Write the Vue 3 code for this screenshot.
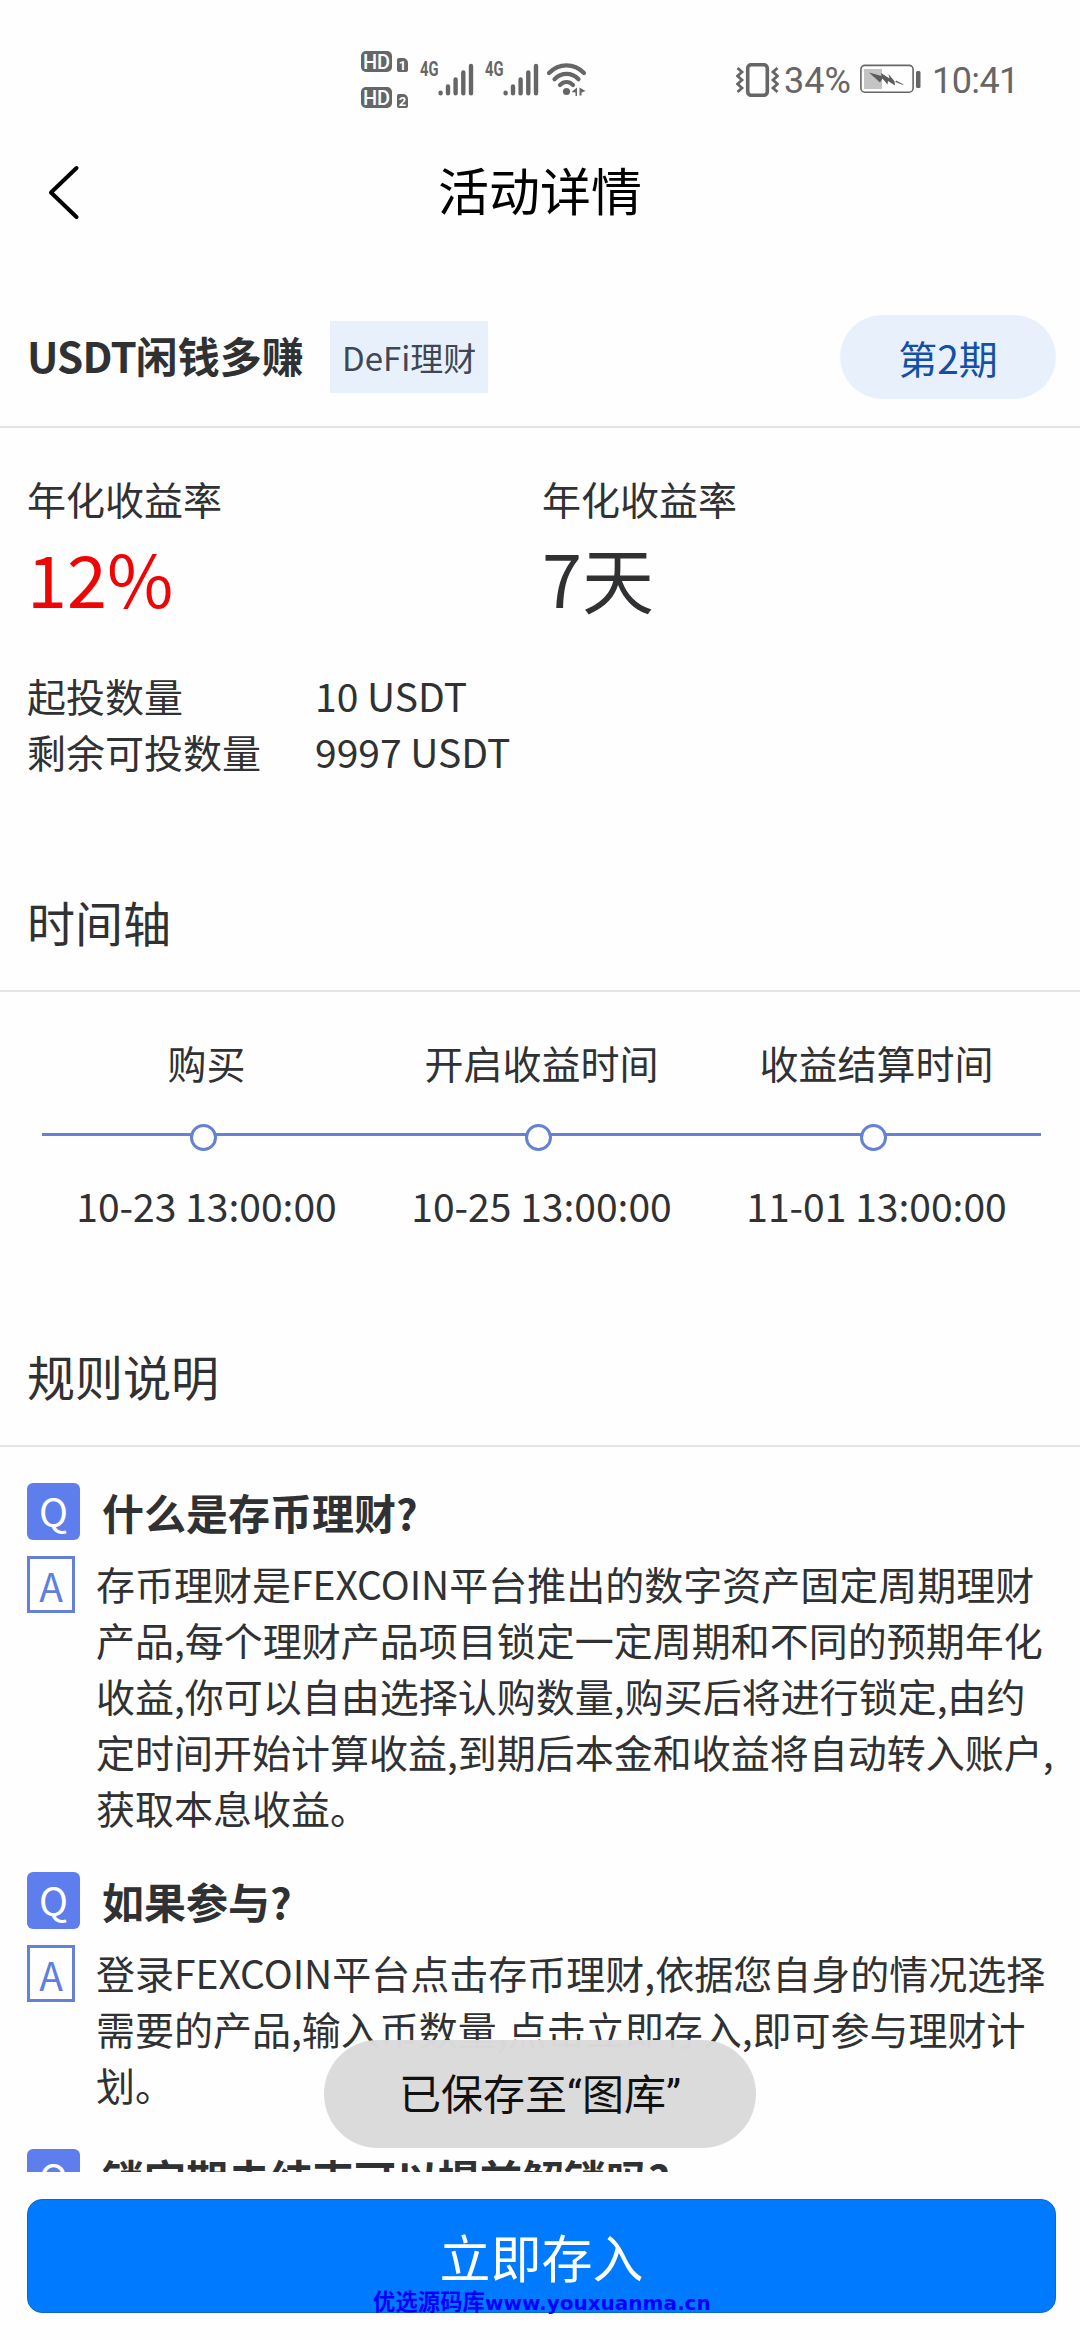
<script setup>
const facts = [
  { label: '起投数量', value: '10 USDT' },
  { label: '剩余可投数量', value: '9997 USDT' },
]

const steps = [
  { label: '购买', time: '10-23 13:00:00' },
  { label: '开启收益时间', time: '10-25 13:00:00' },
  { label: '收益结算时间', time: '11-01 13:00:00' },
]

const rules = [
  {
    q: '什么是存币理财?',
    a: [
      '存币理财是FEXCOIN平台推出的数字资产固定周期理财',
      '产品,每个理财产品项目锁定一定周期和不同的预期年化',
      '收益,你可以自由选择认购数量,购买后将进行锁定,由约',
      '定时间开始计算收益,到期后本金和收益将自动转入账户,',
      '获取本息收益。',
    ],
  },
  {
    q: '如果参与?',
    a: [
      '登录FEXCOIN平台点击存币理财,依据您自身的情况选择',
      '需要的产品,输入币数量,点击立即存入,即可参与理财计',
      '划。',
    ],
  },
  { q: '锁定期未结束可以提前解锁吗?', a: [] },
]
</script>

<template>
  <div class="page">
    <div class="status">
      <div class="sims">
        <div v-for="n in 2" :key="n" class="sim">
          <span class="hd">HD</span>
          <span class="slot">{{ n }}</span>
        </div>
      </div>
      <div v-for="n in 2" :key="'s' + n" class="signal">
        <span class="net">4G</span>
        <svg width="36" height="34" viewBox="0 0 36 34">
          <g stroke="#666" stroke-width="4.4" stroke-linecap="round">
            <path d="M2.6 30.6v.6M10 24.5v6.7M17.6 17.5v13.7M25.3 10.5v20.7M33 4v27.2" />
          </g>
        </svg>
      </div>
      <svg class="wifi" width="42" height="34" viewBox="0 0 42 34">
        <g fill="none" stroke="#666" stroke-width="4.2" stroke-linecap="round">
          <path d="M3 11C13 0.800 28 0.800 38 11" />
          <path d="M8.500 17.200C15.500 10.200 25.500 10.200 32.500 17.200" />
          <path d="M14 23C18 19.200 23 19.200 27 23" />
        </g>
        <circle cx="20.500" cy="29.500" r="3.600" fill="#666" />
        <path d="M25.500 30l5.500-4.500v8.500h-1.500v-3.500zM33.500 25.500l6 3.500-4 1.500v3h-2z" fill="#666" />
      </svg>
      <svg class="vibrate" width="43" height="34" viewBox="0 0 43 34">
        <rect x="11.700" y="1.700" width="19.600" height="30.600" rx="3.500" fill="none" stroke="#666" stroke-width="3.600" />
        <path d="M1.500 5l4.500 4-4.500 4 4.500 4-4.500 4 4.500 4-4.500 4M41.500 5l-4.500 4 4.500 4-4.500 4 4.500 4-4.500 4 4.500 4" fill="none" stroke="#666" stroke-width="2.800" />
      </svg>
      <span class="pct">34%</span>
      <svg class="battery" width="62" height="30" viewBox="0 0 62 30">
        <rect x=".9" y="1.400" width="52.200" height="26.800" rx="4" fill="none" stroke="#666" stroke-width="1.600" />
        <rect x="4" y="5" width="18" height="20" fill="#c4c4c4" />
        <path d="M9 8.500l12.500 3.500-.5-3 8.500 5.500-1-4.500 7 8.500.5-2 7.500 4-.5.500-8.500-3.500.5 4-7-4.500-.5 3.500-5-6-2.500 4z" fill="#5c5c5c" />
        <rect x="56" y="7" width="4.500" height="17" rx="1.500" fill="#666" />
      </svg>
      <span class="clock">10:41</span>
    </div>

    <header class="nav">
      <svg width="34" height="56" viewBox="0 0 34 56">
        <path d="M29.500 4L4 28.500 29.500 53" fill="none" stroke="#000" stroke-width="4" stroke-linecap="round" stroke-linejoin="round" />
      </svg>
      <h1>活动详情</h1>
    </header>

    <main class="content">
      <section class="product">
        <h2><span class="coin">USDT</span>闲钱多赚</h2>
        <span class="tag">DeFi理财</span>
        <span class="period">第2期</span>
      </section>

      <section class="stats">
        <div class="stat">
          <span>年化收益率</span>
          <span class="figure red">12%</span>
        </div>
        <div class="stat">
          <span>年化收益率</span>
          <span class="figure">7天</span>
        </div>
      </section>

      <dl class="facts">
        <div v-for="f in facts" :key="f.label" class="fact">
          <dt>{{ f.label }}</dt>
          <dd>{{ f.value }}</dd>
        </div>
      </dl>

      <h3 class="section-title">时间轴</h3>
      <div class="timeline">
        <div class="row">
          <span v-for="s in steps" :key="s.label">{{ s.label }}</span>
        </div>
        <div class="track">
          <div v-for="s in steps" :key="s.time" class="node"><i></i></div>
        </div>
        <div class="row">
          <span v-for="s in steps" :key="s.time">{{ s.time }}</span>
        </div>
      </div>

      <h3 class="section-title rules-title">规则说明</h3>
      <div class="rules">
        <article v-for="r in rules" :key="r.q" class="rule">
          <div class="question">
            <span class="q-mark">Q</span>
            <strong>{{ r.q }}</strong>
          </div>
          <div v-if="r.a.length" class="answer">
            <span class="a-mark">A</span>
            <p><span v-for="line in r.a" :key="line">{{ line }}</span></p>
          </div>
        </article>
      </div>
    </main>

    <footer class="footer">
      <button>立即存入</button>
    </footer>

    <div class="toast">已保存至“图库”</div>
    <div class="watermark"><b>优选源码库</b><span>www.youxuanma.cn</span></div>
  </div>
</template>

<style>
body {
  margin: 0;
  background: #fff;
}
</style>

<style scoped>
.page {
  position: relative;
  display: flex;
  flex-direction: column;
  width: 1080px;
  height: 2340px;
  overflow: hidden;
  background: #fefefe;
  color: #303133;
  font-family: 'Noto Sans CJK SC', sans-serif;
  font-size: 39px;
  line-height: 56px;
  white-space: nowrap;
}
h1, h2, h3, p, dl, dd {
  margin: 0;
  font-weight: 400;
}

/* status bar */
.status {
  display: flex;
  align-items: flex-start;
  box-sizing: border-box;
  height: 123px;
  flex: none;
  padding: 51px 0 0 361px;
  color: #666;
  font-family: Roboto, sans-serif;
}
.sims {
  display: flex;
  flex-direction: column;
  gap: 15px;
  width: 59px;
}
.sim {
  display: flex;
  align-items: flex-end;
  gap: 5px;
  height: 21px;
}
.hd {
  width: 31px;
  height: 21px;
  border-radius: 5px;
  background: #666;
  color: #fff;
  font-size: 20px;
  font-weight: 500;
  line-height: 22px;
  text-align: center;
}
.slot {
  width: 11px;
  height: 14px;
  border-radius: 2px 5px 2px 2px;
  background: #666;
  color: #fff;
  font-size: 13px;
  font-weight: 700;
  line-height: 15px;
  text-align: center;
}
.signal {
  display: flex;
  width: 65px;
  margin-top: 11px;
}
.net {
  width: 18px;
  font-family: Roboto, sans-serif;
  font-size: 21px;
  font-weight: 700;
  line-height: 15px;
  transform: scaleX(0.7);
  transform-origin: left;
}
.signal svg {
  flex: none;
}
.wifi {
  margin: 11px 0 0 -4px;
}
.vibrate {
  margin: 12px 0 0 148px;
}
.pct,
.clock {
  margin-top: 9px;
  font-size: 36px;
  line-height: 42px;
}
.pct {
  width: 76px;
  margin-left: 5px;
}
.battery {
  margin-top: 13px;
}
.clock {
  margin-left: 10px;
  letter-spacing: -0.6px;
}

/* navigation */
.nav {
  display: grid;
  grid-template-columns: 132px 1fr 132px;
  align-items: center;
  flex: none;
  height: 132px;
  color: #000;
}
.nav svg {
  margin: 5px 0 0 47px;
}
.nav h1 {
  font-size: 51px;
  text-align: center;
}

.content {
  flex: none;
  height: 1917px;
  overflow: hidden;
}

/* product heading */
.product {
  display: flex;
  align-items: center;
  height: 139px;
  margin-top: 32px;
  padding: 0 24px 0 27px;
  border-bottom: 2px solid #e4e4e4;
}
.product h2 {
  width: 303px;
  margin-top: -3px;
  font-size: 42px;
  font-weight: 700;
}
.coin {
  letter-spacing: -0.8px;
}
.tag {
  padding: 0 12px;
  background: #e8f1fb;
  color: #3f4656;
  font-size: 33px;
  line-height: 72px;
}
.period {
  width: 216px;
  margin-left: auto;
  border-radius: 42px;
  background: #e8f1fb;
  color: #1450a5;
  line-height: 84px;
  text-align: center;
}

.stats {
  display: flex;
  padding: 42px 0 0 27px;
}
.stat {
  display: flex;
  flex-direction: column;
  width: 515px;
}
.figure {
  font-size: 72px;
  line-height: 102px;
}
.red {
  color: #ee0505;
}
.facts {
  margin-top: 39px;
  padding-left: 27px;
}
.fact {
  display: flex;
  height: 56px;
}
.fact dt {
  width: 288px;
}

.section-title {
  height: 138px;
  margin-top: 73px;
  border-bottom: 2px solid #e4e4e4;
  padding-left: 27px;
  font-size: 48px;
  line-height: 138px;
}

/* timeline */
.timeline {
  padding: 42px 36px 0 39px;
}
.row,
.track {
  display: grid;
  grid-template-columns: repeat(3, 1fr);
  text-align: center;
}
.track {
  margin: 34px 0 26px;
  background: linear-gradient(#6581cf, #6581cf) 3px 9px / 999px 3px no-repeat;
}
.node {
  height: 27px;
  padding-right: 6px;
}
.node i {
  display: block;
  box-sizing: border-box;
  width: 27px;
  height: 27px;
  margin: 0 auto;
  border: 3px solid #6581d4;
  border-radius: 50%;
  background: #fff;
}

/* rules */
.rules-title {
  margin-top: 72px;
  height: 140px;
  line-height: 140px;
}
.rules {
  display: flex;
  flex-direction: column;
  gap: 36px;
  padding: 36px 0 0 27px;
}
.question {
  display: flex;
}
.question strong {
  margin-left: 22px;
  font-size: 42px;
  font-weight: 700;
  line-height: 57px;
}
.q-mark {
  width: 53px;
  height: 57px;
  border-radius: 6px;
  background: #5f7eed;
  color: #fff;
  line-height: 54px;
  text-align: center;
}
.answer {
  display: flex;
  align-items: flex-start;
  margin-top: 16px;
}
.a-mark {
  box-sizing: border-box;
  width: 48px;
  height: 57px;
  border: 3px solid #6481d6;
  color: #5f7ee0;
  line-height: 53px;
  text-align: center;
}
.answer p {
  margin: -1px 0 1px 21px;
}
.answer p span {
  display: block;
}

.footer {
  flex: 1;
  padding: 27px 24px 0 27px;
}
.footer button {
  display: block;
  width: 1029px;
  height: 114px;
  padding: 0;
  border: 1px solid #0c68cc;
  border-radius: 15px;
  background: #007aff;
  color: #fff;
  font: 51px/112px 'Noto Sans CJK SC', sans-serif;
}

.toast {
  position: absolute;
  top: 2040px;
  left: 324px;
  box-sizing: border-box;
  width: 432px;
  height: 108px;
  padding-top: 3px;
  border-radius: 54px;
  background: rgba(218, 218, 218, 0.98);
  color: #111;
  font-family: Roboto, 'Noto Sans CJK SC', sans-serif;
  font-size: 42px;
  line-height: 106px;
  text-align: center;
}
.watermark {
  position: absolute;
  top: 2286px;
  left: 373px;
  display: flex;
  align-items: baseline;
  color: #0000ff;
  font-size: 22.4px;
  line-height: 28px;
}
.watermark span {
  font-family: 'DejaVu Sans', sans-serif;
  font-size: 20px;
  font-weight: 700;
}
</style>
